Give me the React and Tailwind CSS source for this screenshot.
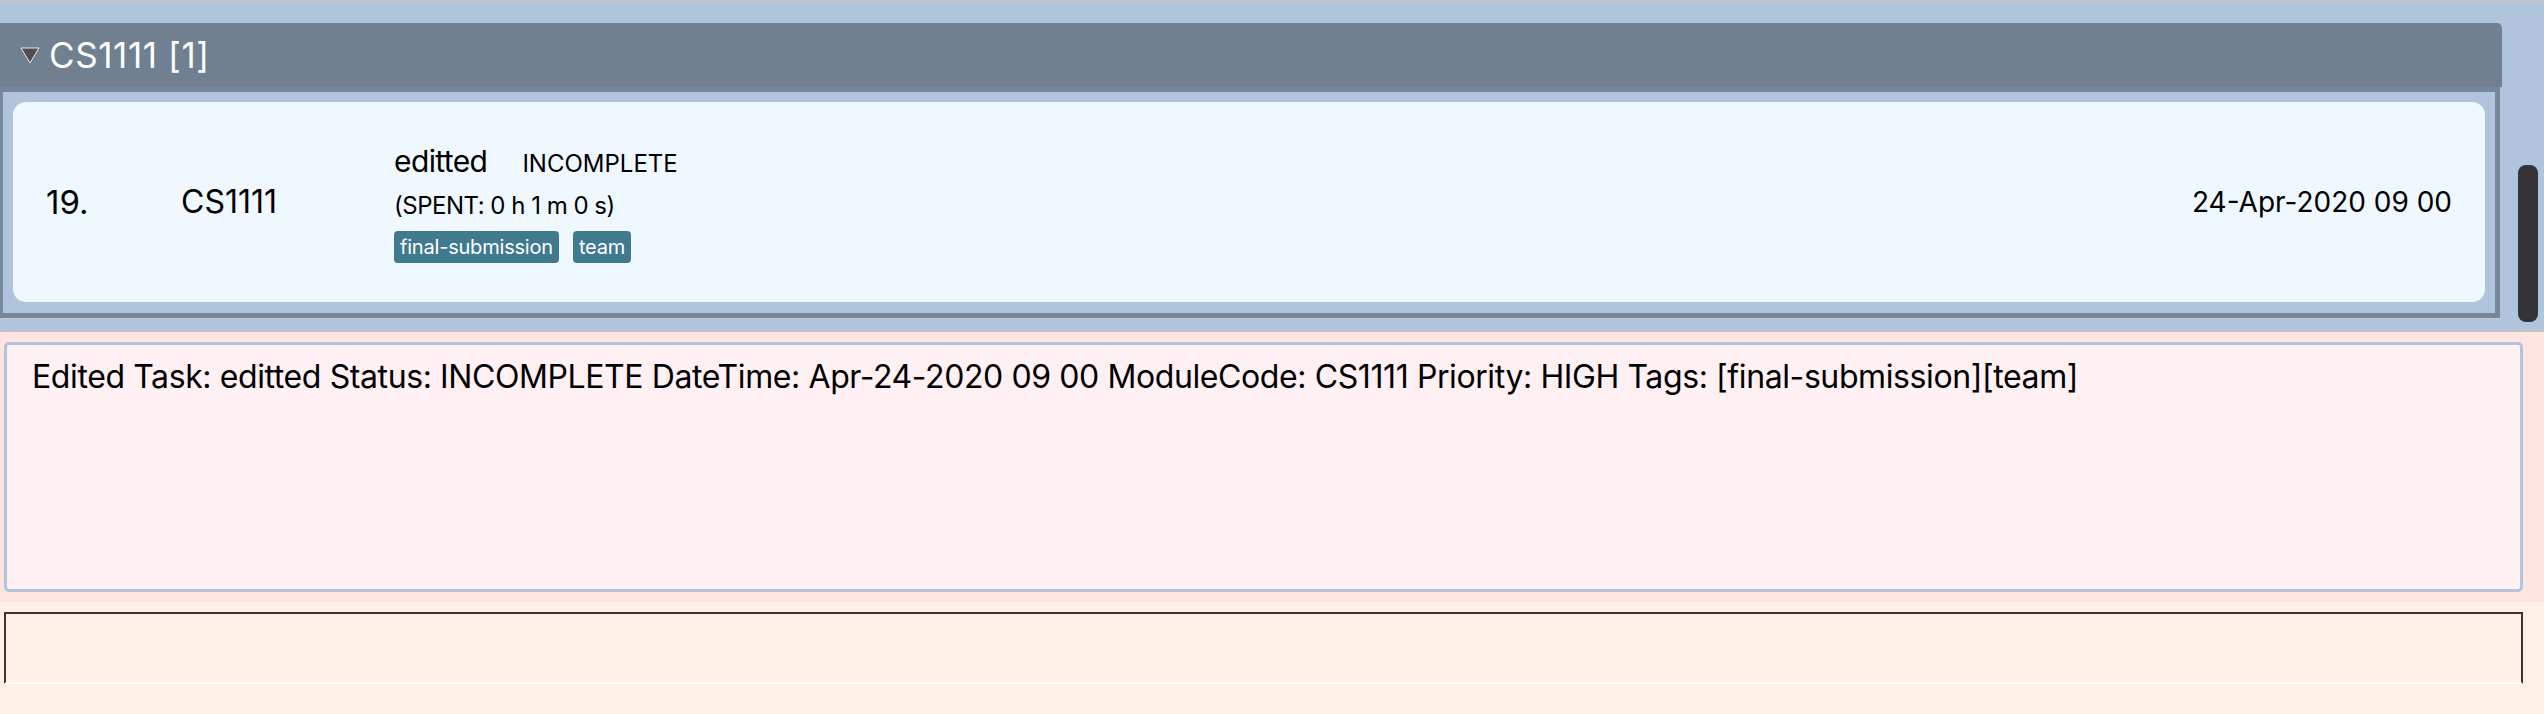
import React from "react";

const font = { fontFamily: "Inter, 'Noto Sans', sans-serif" };

function Tag({ children }) {
  return (
    <span className="h-[32px] px-[6px] rounded-[4px] bg-[#3f7a8f] text-white text-[20px] leading-[32px] tracking-[-0.2px] flex items-center">
      {children}
    </span>
  );
}

export default function App() {
  return (
    <div
      className="w-[2544px] h-[714px] overflow-hidden flex flex-col bg-[#fef0e6]"
      style={font}
    >
      {/* Task list panel */}
      <div className="h-[332px] shrink-0 bg-[#b0c4de] border-t-2 border-[#c4c4c4] border-b-2 border-b-[#c4c4c4] flex">
        <div className="w-[2502px] pt-[21px] flex flex-col">
          <div className="h-[64px] bg-[#708090] rounded-tr-[5px] flex items-center pl-[20px] gap-[9px]">
            <svg width="20" height="17" viewBox="0 0 20 17">
              <polygon points="1,1 19,1 10,16" fill="#4f4f4f" stroke="#e8e8e8" strokeWidth="1" />
            </svg>
            <span className="text-white text-[35px] leading-none tracking-[0.6px]">CS1111 [1]</span>
          </div>
          <div className="w-[2500px] border-t-[5px] border-l-[3px] border-r-[5px] border-b-[5px] border-[#77879a] bg-[#b0c4de] p-[10px] pb-[11px]">
            <div className="h-[200px] rounded-[13px] bg-[#f0f8ff] flex items-center px-[33px] text-black">
              <div className="w-[135px] text-[33px] leading-none">19.</div>
              <div className="w-[213px] text-[32px] leading-none">CS1111</div>
              <div className="flex flex-col">
                <div className="h-[38px] flex items-baseline">
                  <span className="text-[30px] leading-[38px] tracking-[-0.6px]">editted</span>
                  <span className="ml-[35px] text-[24px] leading-[38px]">INCOMPLETE</span>
                </div>
                <div className="mt-[11px] h-[30px] text-[24px] leading-[30px] tracking-[-0.5px]">(SPENT: 0 h 1 m 0 s)</div>
                <div className="mt-[10px] flex gap-[14px]">
                  <Tag>final-submission</Tag>
                  <Tag>team</Tag>
                </div>
              </div>
              <div className="ml-auto text-[28px] leading-none">24-Apr-2020 09 00</div>
            </div>
          </div>
          <div className="h-[1px] bg-[#c8c8c8] w-[2502px]" />
        </div>
        <div className="pl-[16px] pt-[163px]">
          <div className="w-[20px] h-[157px] rounded-[8px] bg-[#333338]" />
        </div>
      </div>

      {/* Result display */}
      <div className="h-[270px] shrink-0 bg-[#ffe4e1] pt-[10px] pb-[10px] pl-[4px] pr-[21px]">
        <div className="h-[250px] border-[3px] border-[#b0c4de] rounded-[5px] bg-[#fff0f4] pl-[25px] pt-[15px]">
          <div className="text-[32px] leading-[34px] tracking-[-0.4px] text-black whitespace-nowrap">
            Edited Task: editted Status: INCOMPLETE DateTime: Apr-24-2020 09 00 ModuleCode: CS1111 Priority: HIGH Tags: [final-submission][team]
          </div>
        </div>
      </div>

      {/* Command box */}
      <div className="flex-1 bg-[#fef0e6] pt-[10px] pl-[4px] pr-[21px]">
        <div className="h-[72px] border-t-2 border-l-2 border-r-2 border-b-2 border-[#383838] border-b-white bg-[#fef0e6]" />
      </div>
    </div>
  );
}
